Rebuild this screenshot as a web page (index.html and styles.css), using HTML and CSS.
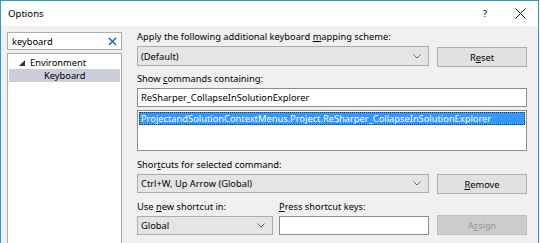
FILE: index.html
```html
<!DOCTYPE html>
<html lang="en">
<head>
  <meta charset="utf-8">
  <title>Options</title>
  <link rel="stylesheet" href="styles.css">
</head>
<body>
  <div class="window">
    <div class="title-bar">
      <span class="title">Options</span>
      <span class="title-btn help">?</span>
      <span class="title-btn close">
        <svg width="11" height="11" viewBox="0 0 11 11"><path d="M0.5 0.5 L10.5 10.5 M10.5 0.5 L0.5 10.5" stroke="#222" stroke-width="1" fill="none"/></svg>
      </span>
    </div>

    <div class="dialog">
      <div class="left">
        <div class="search-box">
          <span class="search-text">keyboard</span>
          <svg class="clear" width="9" height="9" viewBox="0 0 9 9"><path d="M1 1 L8 8 M8 1 L1 8" stroke="#1c6bb8" stroke-width="1.6" fill="none"/></svg>
        </div>
        <ul class="tree">
          <li class="node">
            <svg class="arrow" width="6" height="6" viewBox="0 0 6 6"><path d="M6 0 L6 6 L0 6 Z" fill="#333"/></svg>
            Environment
          </li>
          <li class="leaf selected">Keyboard</li>
        </ul>
      </div>

      <div class="right">
        <div class="label">Apply the following additional keyboard <u>m</u>apping scheme:</div>
        <div class="row">
          <div class="combo wide">
            <span>(Default)</span>
            <svg class="chevron" width="8" height="5" viewBox="0 0 8 5"><path d="M0.5 0.5 L4 4 L7.5 0.5" stroke="#666" fill="none"/></svg>
          </div>
          <button type="button" class="btn">R<u>e</u>set</button>
        </div>

        <div class="label gap">Show <u>c</u>ommands containing:</div>
        <div class="textbox">ReSharper_CollapseInSolutionExplorer</div>
        <div class="listbox">
          <div class="item selected">ProjectandSolutionContextMenus.Project.ReSharper_CollapseInSolutionExplorer</div>
        </div>

        <div class="label gap2">Shor<u>t</u>cuts for selected command:</div>
        <div class="row">
          <div class="combo wide short">
            <span>Ctrl+W, Up Arrow (Global)</span>
            <svg class="chevron" width="8" height="5" viewBox="0 0 8 5"><path d="M0.5 0.5 L4 4 L7.5 0.5" stroke="#666" fill="none"/></svg>
          </div>
          <button type="button" class="btn short"><u>R</u>emove</button>
        </div>

        <div class="bottom">
          <div class="field scope">
            <div class="label">Use <u>n</u>ew shortcut in:</div>
            <div class="combo short">
              <span>Global</span>
              <svg class="chevron" width="8" height="5" viewBox="0 0 8 5"><path d="M0.5 0.5 L4 4 L7.5 0.5" stroke="#666" fill="none"/></svg>
            </div>
          </div>
          <div class="field keys">
            <div class="label"><u>P</u>ress shortcut keys:</div>
            <div class="textbox short"></div>
          </div>
          <button type="button" class="btn short disabled">A<u>s</u>sign</button>
        </div>
      </div>
    </div>
  </div>
</body>
</html>
```

FILE: styles.css
```css
html,
body {
  margin: 0;
  padding: 0;
  background: #ffffff;
}

body {
  font-family: "Noto Sans", "Open Sans", sans-serif;
  font-size: 9.3px;
  color: #000;
}

.window {
  width: 539px;
  height: 243px;
  box-sizing: border-box;
  border: 1px solid #2b96cf;
  border-bottom: none;
  background: #f0f0f0;
  overflow: hidden;
}

.title-bar {
  height: 25px;
  background: #fff;
  display: flex;
  align-items: center;
}

.title {
  padding-left: 7px;
  flex: 1;
  font-size: 9.6px;
}

.title-btn {
  display: flex;
  align-items: center;
  justify-content: center;
}

.help {
  width: 14px;
  margin-right: 23px;
}

.close {
  width: 11px;
  margin-right: 12px;
}

.dialog {
  display: flex;
  height: 217px;
}

/* left side */
.left {
  width: 115px;
  margin-left: 6px;
  padding-top: 6px;
  display: flex;
  flex-direction: column;
}

.search-box {
  height: 18px;
  box-sizing: border-box;
  background: #fff;
  border: 1px solid #acacac;
  display: flex;
  align-items: center;
  padding: 0 4px 0 4px;
}

.search-text {
  flex: 1;
}

.tree {
  list-style: none;
  margin: 3px 0 0;
  padding: 2px 0 0;
  flex: 1;
  background: #fff;
  border: 1px solid #acacac;
  border-bottom: none;
}

.tree li {
  height: 13px;
  line-height: 13px;
  margin: 0 1px;
}

.node {
  padding-left: 10px;
  display: flex;
  align-items: center;
}

.arrow {
  margin-right: 5px;
}

.leaf {
  padding-left: 35px;
}

.selected {
  background: #cccedb;
}

/* right side */
.right {
  width: 390px;
  margin-left: 15px;
  padding-top: 3px;
}

.label {
  height: 16px;
  line-height: 16px;
  margin-bottom: 1px;
  white-space: nowrap;
}

.gap {
  margin-top: 5px;
}

.gap2 {
  margin-top: 6px;
}

.row {
  display: flex;
  gap: 8px;
  height: 20px;
}

.row + .label {
  margin-top: 5px;
}

.combo {
  box-sizing: border-box;
  height: 20px;
  background: #e5e5e5;
  border: 1px solid #acacac;
  display: flex;
  align-items: center;
  padding: 0 7px 0 3px;
}

.combo span {
  flex: 1;
}

.wide {
  width: 292px;
}

.short {
  height: 19px;
}

.btn {
  width: 90px;
  height: 20px;
  box-sizing: border-box;
  margin: 1px 0 0;
  padding: 0;
  background: #e1e1e1;
  border: 1px solid #adadad;
  font-family: inherit;
  font-size: 9.3px;
  color: #000;
}

.btn.short {
  margin-top: 0;
}

.disabled {
  background: #cccccc;
  border-color: #bfbfbf;
  color: #9a9a9a;
}

.textbox {
  box-sizing: border-box;
  height: 19px;
  line-height: 17px;
  background: #fff;
  border: 1px solid #8c8c8c;
  padding: 0 3px;
}

.listbox {
  box-sizing: border-box;
  height: 41px;
  margin-top: 3px;
  background: #fff;
  border: 1px solid #8c8c8c;
  padding: 1px;
}

.item {
  height: 13px;
  line-height: 13px;
  padding: 0 2px;
}

.item.selected {
  background: #3399ff;
  color: #fff;
  outline: 1px dotted #333;
  outline-offset: -1px;
}

.bottom {
  display: flex;
  align-items: flex-end;
  margin-top: 5px;
}

.scope {
  width: 136px;
}

.keys {
  width: 150px;
  margin-left: 6px;
  margin-right: 8px;
}
```
